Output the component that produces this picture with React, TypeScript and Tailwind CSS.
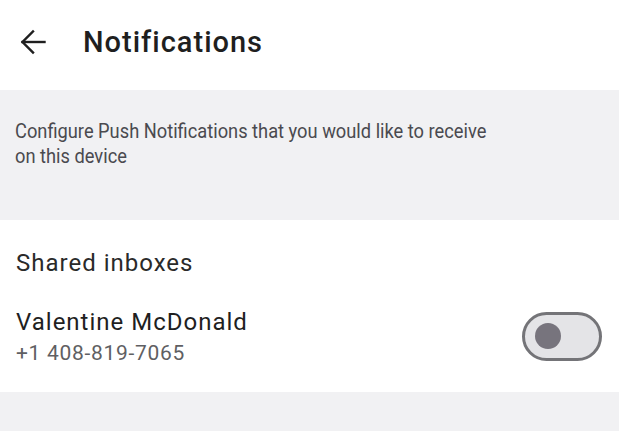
export default function App() {
  return (
    <div className="w-[619px] h-[435px] bg-white font-['Roboto',sans-serif] overflow-hidden">
      {/* Header */}
      <div className="h-[90px] flex items-center px-[20px] pb-[6px]">
        <svg width="26" height="26" viewBox="0 0 26 26" fill="none" stroke="#1f1f1f" strokeWidth="2.4" strokeLinecap="square">
          <path d="M2.5 13H24.5" />
          <path d="M13 2.5L2.5 13L13 23.5" />
        </svg>
        <h1 className="ml-[37px] text-[29px] leading-[34px] font-medium text-[#1f1f1f] tracking-[1px]">Notifications</h1>
      </div>

      {/* Info band */}
      <div className="h-[130px] bg-[#f1f1f3] px-[15px] pt-[29px]">
        <p className="w-[555px] origin-left scale-x-[0.87] text-[21px] leading-[25px] text-[#4a4a4f]">
          Configure Push Notifications that you would like to receive on this device
        </p>
      </div>

      {/* Shared inboxes */}
      <div className="h-[172px] px-[16px]">
        <div className="pt-[28px] text-[24px] leading-[30px] text-[#2a2a2a] tracking-[1px]">Shared inboxes</div>
        <div className="mt-[29px] flex items-center justify-between">
          <div>
            <div className="text-[24px] leading-[30px] text-[#1f1f1f] tracking-[1px]">Valentine McDonald</div>
            <div className="mt-[1px] text-[21px] leading-[30px] text-[#5f5f63] tracking-[0.7px]">+1 408-819-7065</div>
          </div>
          <div className="mr-[1px] -mt-[3px] w-[80px] h-[49px] rounded-full border-[3px] border-[#747478] bg-[#e4e4e7] flex items-center pl-[10px]">
            <div className="w-[26px] h-[26px] rounded-full bg-[#77747d]" />
          </div>
        </div>
      </div>

      <div className="h-[39px] bg-[#f1f1f3]" />
    </div>
  )
}
